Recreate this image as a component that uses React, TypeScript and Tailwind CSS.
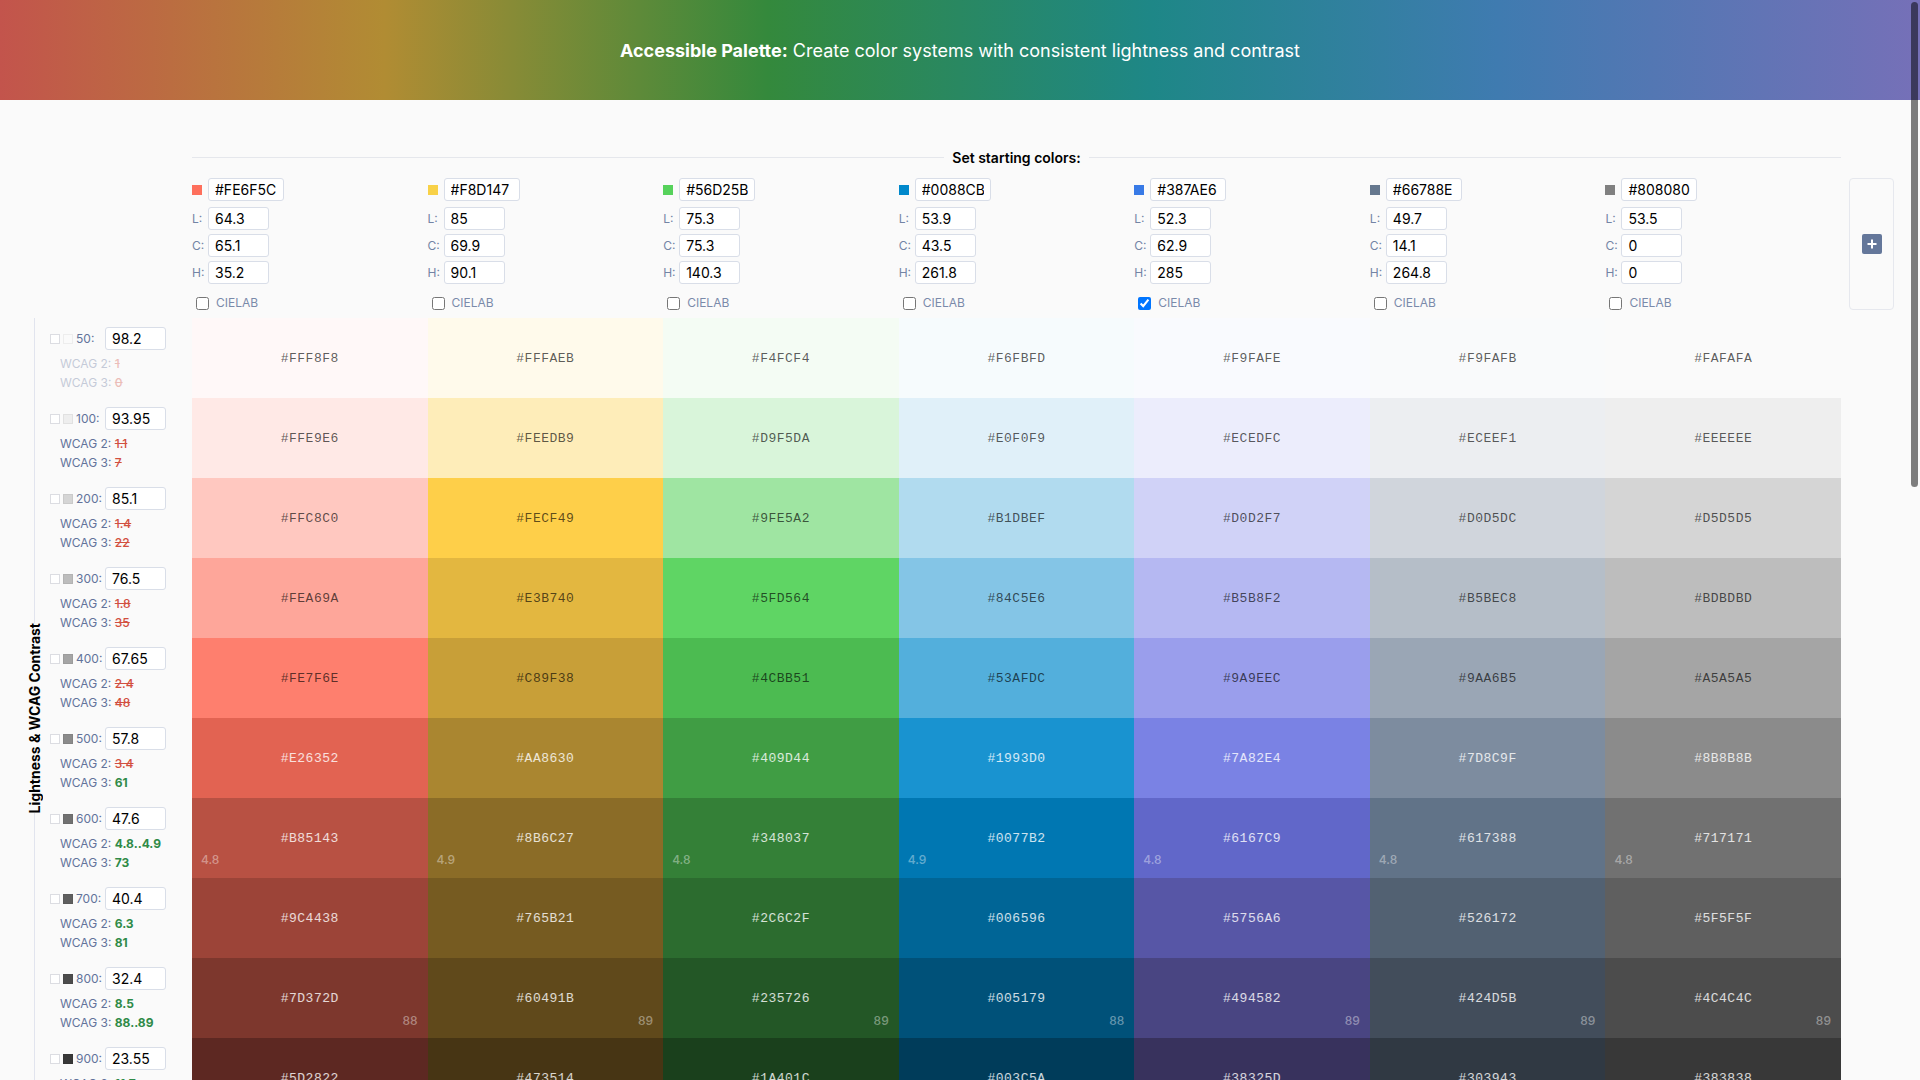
import React from 'react';

type Column = {
  hex: string;
  l: string;
  c: string;
  h: string;
  lab: boolean;
  cells: string[];
  c600: string;
  c800: string;
};

const columns: Column[] = [
  {
    hex: '#FE6F5C', l: '64.3', c: '65.1', h: '35.2', lab: false, c600: '4.8', c800: '88',
    cells: ['#FFF8F8', '#FFE9E6', '#FFC8C0', '#FEA69A', '#FE7F6E', '#E26352', '#B85143', '#9C4438', '#7D372D', '#5D2822'],
  },
  {
    hex: '#F8D147', l: '85', c: '69.9', h: '90.1', lab: false, c600: '4.9', c800: '89',
    cells: ['#FFFAEB', '#FEEDB9', '#FECF49', '#E3B740', '#C89F38', '#AA8630', '#8B6C27', '#765B21', '#60491B', '#473514'],
  },
  {
    hex: '#56D25B', l: '75.3', c: '75.3', h: '140.3', lab: false, c600: '4.8', c800: '89',
    cells: ['#F4FCF4', '#D9F5DA', '#9FE5A2', '#5FD564', '#4CBB51', '#409D44', '#348037', '#2C6C2F', '#235726', '#1A401C'],
  },
  {
    hex: '#0088CB', l: '53.9', c: '43.5', h: '261.8', lab: false, c600: '4.9', c800: '88',
    cells: ['#F6FBFD', '#E0F0F9', '#B1DBEF', '#84C5E6', '#53AFDC', '#1993D0', '#0077B2', '#006596', '#005179', '#003C5A'],
  },
  {
    hex: '#387AE6', l: '52.3', c: '62.9', h: '285', lab: true, c600: '4.8', c800: '89',
    cells: ['#F9FAFE', '#ECEDFC', '#D0D2F7', '#B5B8F2', '#9A9EEC', '#7A82E4', '#6167C9', '#5756A6', '#494582', '#38325D'],
  },
  {
    hex: '#66788E', l: '49.7', c: '14.1', h: '264.8', lab: false, c600: '4.8', c800: '89',
    cells: ['#F9FAFB', '#ECEEF1', '#D0D5DC', '#B5BEC8', '#9AA6B5', '#7D8C9F', '#617388', '#526172', '#424D5B', '#303943'],
  },
  {
    hex: '#808080', l: '53.5', c: '0', h: '0', lab: false, c600: '4.8', c800: '89',
    cells: ['#FAFAFA', '#EEEEEE', '#D5D5D5', '#BDBDBD', '#A5A5A5', '#8B8B8B', '#717171', '#5F5F5F', '#4C4C4C', '#383838'],
  },
];

type Step = {
  name: string;
  value: string;
  gray: string;
  w2: string;
  w3: string;
  w2ok: boolean;
  w3ok: boolean;
  faded?: boolean;
};

const steps: Step[] = [
  { name: '50', value: '98.2', gray: '#FAFAFA', w2: '1', w3: '0', w2ok: false, w3ok: false, faded: true },
  { name: '100', value: '93.95', gray: '#EEEEEE', w2: '1.1', w3: '7', w2ok: false, w3ok: false },
  { name: '200', value: '85.1', gray: '#D5D5D5', w2: '1.4', w3: '22', w2ok: false, w3ok: false },
  { name: '300', value: '76.5', gray: '#BDBDBD', w2: '1.8', w3: '35', w2ok: false, w3ok: false },
  { name: '400', value: '67.65', gray: '#A5A5A5', w2: '2.4', w3: '48', w2ok: false, w3ok: false },
  { name: '500', value: '57.8', gray: '#8B8B8B', w2: '3.4', w3: '61', w2ok: false, w3ok: true },
  { name: '600', value: '47.6', gray: '#717171', w2: '4.8..4.9', w3: '73', w2ok: true, w3ok: true },
  { name: '700', value: '40.4', gray: '#5F5F5F', w2: '6.3', w3: '81', w2ok: true, w3ok: true },
  { name: '800', value: '32.4', gray: '#4C4C4C', w2: '8.5', w3: '88..89', w2ok: true, w3ok: true },
  { name: '900', value: '23.55', gray: '#383838', w2: '11.7', w3: '95', w2ok: true, w3ok: true },
];

const inputCls =
  'h-[23px] border border-[#d9dee8] rounded-[3px] bg-white px-[6px] text-[14px] text-black outline-none';

function Score({ value, ok }: { value: string; ok: boolean }) {
  return ok ? (
    <span className="font-bold text-[#2f8a47]">{value}</span>
  ) : (
    <span className="font-medium text-[#d24f3f] line-through">{value}</span>
  );
}

function StepRow({ step }: { step: Step }) {
  return (
    <div className="h-[80px] pt-[9px]">
      <div className="flex items-center">
        <span className="w-[10px] h-[10px] border border-[#dcdde2] bg-white" />
        <span
          className="w-[10px] h-[10px] ml-[3px] border border-black/5"
          style={{ backgroundColor: step.gray }}
        />
        <span className="w-[32px] pl-[3px] text-[12px] text-[#62739a]">{step.name}:</span>
        <input className={`${inputCls} w-[61px]`} defaultValue={step.value} />
      </div>
      <div className={`pl-[10px] mt-[4px] text-[12px] leading-[19px] text-[#62739a] ${step.faded ? 'opacity-35' : ''}`}>
        <div>
          WCAG 2: <Score value={step.w2} ok={step.w2ok} />
        </div>
        <div>
          WCAG 3: <Score value={step.w3} ok={step.w3ok} />
        </div>
      </div>
    </div>
  );
}

function ColorInputs({ col }: { col: Column }) {
  const label = 'w-[16px] text-[12px] text-[#7384a5]';
  return (
    <div className="flex flex-col">
      <div className="flex items-center">
        <span className="w-[10px] h-[10px] mr-[6px]" style={{ backgroundColor: col.hex }} />
        <input className={`${inputCls} w-[76px]`} defaultValue={col.hex} />
      </div>
      <div className="flex items-center mt-[6px]">
        <span className={label}>L:</span>
        <input className={`${inputCls} w-[61px]`} defaultValue={col.l} />
      </div>
      <div className="flex items-center mt-[4px]">
        <span className={label}>C:</span>
        <input className={`${inputCls} w-[61px]`} defaultValue={col.c} />
      </div>
      <div className="flex items-center mt-[4px]">
        <span className={label}>H:</span>
        <input className={`${inputCls} w-[61px]`} defaultValue={col.h} />
      </div>
      <label className="flex items-center h-[14px] mt-[12px] text-[12px] text-[#7a8aaa]">
        <input type="checkbox" defaultChecked={col.lab} className="ml-[4px] accent-[#0075ff]" />
        <span className="ml-[7px]">CIELAB</span>
      </label>
    </div>
  );
}

function Cell({ hex, row, col }: { hex: string; row: number; col: Column }) {
  const dark = row >= 5;
  return (
    <div
      className="relative h-[80px] flex items-center justify-center pt-[2px]"
      style={{ backgroundColor: hex }}
    >
      <span
        className={`font-['Liberation_Mono',monospace] text-[13px] tracking-[0.5px] ${
          dark ? 'text-white/80' : 'text-black/65'
        }`}
      >
        {hex}
      </span>
      {row === 6 && (
        <span className="absolute left-[9px] bottom-[9px] text-[12px] font-medium text-white/40">
          {col.c600}
        </span>
      )}
      {row === 8 && (
        <span className="absolute right-[10px] bottom-[8px] text-[12px] font-medium text-white/40">
          {col.c800}
        </span>
      )}
    </div>
  );
}

export default function App() {
  return (
    <div className="h-screen overflow-hidden bg-[#fafafa] font-['Inter','Noto_Sans',sans-serif]">
      {/* Header */}
      <header className="h-[100px] flex items-center justify-center bg-[linear-gradient(90deg,#c3544c_0%,#b18c33_20%,#34893c_40%,#1e8787_60%,#3f7bb0_78%,#7670b8_100%)]">
        <h1 className="text-[18px] text-white">
          <span className="font-bold">Accessible Palette:</span> Create color systems with consistent lightness and contrast
        </h1>
      </header>

      {/* Starting colors */}
      <section className="pl-[192px] pt-[47px]">
        <div className="w-[1649px] h-[20px] flex items-center">
          <div className="flex-1 h-px bg-[#e5e7ec]" />
          <span className="px-[8px] text-[14px] font-semibold text-black">Set starting colors:</span>
          <div className="flex-1 h-px bg-[#e5e7ec]" />
        </div>
        <div className="flex mt-[11px]">
          <div className="w-[1649px] grid grid-cols-7">
            {columns.map((col) => (
              <ColorInputs key={col.hex} col={col} />
            ))}
          </div>
          <div className="ml-[8px] w-[45px] h-[132px] border border-[#e6e8ee] rounded-[4px] flex items-center justify-center">
            <button className="w-[20px] h-[20px] rounded-[2px] bg-[#64779a] flex items-center justify-center">
              <svg width="10" height="10" viewBox="0 0 10 10">
                <path d="M5 0.5v9M0.5 5h9" stroke="white" strokeWidth="2" />
              </svg>
            </button>
          </div>
        </div>
      </section>

      {/* Palette */}
      <section className="flex mt-[8px]">
        <div className="w-[192px] flex">
          <div className="w-[50px] flex">
            <div className="ml-[28px] w-[12px] flex flex-col items-center">
              <div className="w-px flex-1 bg-[#e1e4ee]" />
              <span className="[writing-mode:vertical-rl] rotate-180 py-[5px] text-[14px] font-bold text-black whitespace-nowrap">
                Lightness &amp; WCAG Contrast
              </span>
              <div className="w-px flex-1 bg-[#e1e4ee]" />
            </div>
          </div>
          <div className="flex flex-col">
            {steps.map((s) => (
              <StepRow key={s.name} step={s} />
            ))}
          </div>
        </div>
        <div className="w-[1649px] grid grid-cols-7">
          {columns.map((col) => (
            <div key={col.hex} className="flex flex-col">
              {col.cells.map((hex, i) => (
                <Cell key={hex} hex={hex} row={i} col={col} />
              ))}
            </div>
          ))}
        </div>
      </section>

      {/* overlay scrollbar */}
      <div className="fixed right-[2px] top-[2px] w-[7px] h-[485px] rounded-full bg-black/50" />
    </div>
  );
}
